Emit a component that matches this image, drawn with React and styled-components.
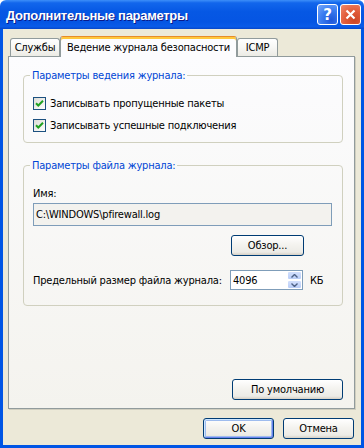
import React from "react";
import styled, { createGlobalStyle, css } from "styled-components";

const uiFont = `"DejaVu Sans Condensed", "Liberation Sans", sans-serif`;

const GlobalStyle = createGlobalStyle`
  html, body { margin: 0; padding: 0; background: #ffffff; }
  #root { width: 364px; height: 448px; }
`;

const Window = styled.div`
  width: 364px;
  height: 448px;
  display: flex;
  flex-direction: column;
  box-sizing: border-box;
  font-family: ${uiFont};
  font-size: 11px;
  letter-spacing: -0.2px;
  white-space: nowrap;
  color: #000;
`;

const TitleBar = styled.div`
  height: 29px;
  flex: none;
  display: flex;
  align-items: center;
  padding: 0 3px 0 6px;
  border-radius: 6px 6px 0 0;
  background: linear-gradient(
    180deg,
    #3d8ff9 0%,
    #1266ec 10%,
    #0658e4 40%,
    #0555e3 75%,
    #0a5be8 92%,
    #0746c9 100%
  );
`;

const Title = styled.div`
  flex: 1;
  color: #fff;
  font-family: "Liberation Sans", "DejaVu Sans", sans-serif;
  font-weight: bold;
  font-size: 13px;
  letter-spacing: -0.3px;
  text-shadow: 1px 1px 0 #0a1a8a;
  padding-top: 1px;
`;

const TitleButtons = styled.div`
  display: flex;
  gap: 2px;
`;

const TitleButton = styled.div`
  width: 21px;
  height: 21px;
  box-sizing: border-box;
  border: 1px solid #fff;
  border-radius: 3px;
  display: grid;
  place-items: center;
  color: #fff;
  font-family: "DejaVu Sans", sans-serif;
  font-weight: bold;
  font-size: 15px;
  letter-spacing: 0;
  ${(p) =>
    p.$kind === "close"
      ? css`
          background: radial-gradient(circle at 70% 80%, #cc4625 0%, #e15a38 45%, #f08a6e 100%);
        `
      : css`
          background: radial-gradient(circle at 70% 80%, #1f56d8 0%, #3a7cf0 50%, #77a8fb 100%);
        `}
`;

const Frame = styled.div`
  flex: 1;
  display: flex;
  flex-direction: column;
  background: #ece9d8;
  border: 3px solid #0055e5;
  border-top: none;
  padding: 7px 6px 6px 5px;
  min-height: 0;
`;

const TabRow = styled.div`
  display: flex;
  align-items: flex-end;
  height: 20px;
  padding-left: 2px;
  position: relative;
  z-index: 1;
`;

const Tab = styled.div`
  box-sizing: border-box;
  width: ${(p) => p.$w}px;
  height: 18px;
  border: 1px solid #919b9c;
  border-bottom: none;
  border-radius: 3px 3px 0 0;
  display: flex;
  align-items: center;
  justify-content: center;
  background: linear-gradient(180deg, #ffffff 0%, #f7f7f4 50%, #ecebe5 100%);
  ${(p) =>
    p.$active &&
    css`
      height: 21px;
      margin-bottom: -1px;
      background: #fcfcfe;
      border-top: 1px solid #e68b2c;
      box-shadow: inset 0 2px 0 #ffc83c;
      padding-top: 1px;
    `}
`;

const Panel = styled.div`
  flex: 1;
  display: flex;
  flex-direction: column;
  border: 1px solid #919b9c;
  box-shadow: 1px 1px 0 #d0cebf;
  background: linear-gradient(180deg, #fcfcfe 0%, #f4f3ee 100%);
  padding: 12px 11px 8px 14px;
`;

const Group = styled.fieldset`
  margin: ${(p) => (p.$first ? "0" : "16px 0 0 0")};
  padding: 0 10px ${(p) => p.$pb}px 9px;
  border: 1px solid #d0d0bf;
  border-radius: 4px;
  min-width: 0;
  display: flex;
  flex-direction: column;
`;

const Legend = styled.legend`
  padding: 0 2px;
  margin-left: -3px;
  color: #0046d5;
  line-height: 13px;
  font-size: 11px;
`;

const CheckRow = styled.label`
  display: flex;
  align-items: center;
  height: 13px;
  margin-top: ${(p) => p.$mt}px;
`;

const Box = styled.span`
  width: 13px;
  height: 13px;
  box-sizing: border-box;
  border: 1px solid #1c5180;
  background: linear-gradient(135deg, #dcdcd7 0%, #f5f5f2 70%, #ffffff 100%);
  display: grid;
  place-items: center;
  flex: none;
`;

const CheckText = styled.span`
  margin-left: 4px;
  line-height: 13px;
`;

const FieldLabel = styled.div`
  margin-top: 15px;
  line-height: 13px;
`;

const TextField = styled.div`
  margin-top: 3px;
  height: 23px;
  box-sizing: border-box;
  border: 1px solid #7f9db9;
  background: #f3f2ee;
  display: flex;
  align-items: center;
  padding-left: 2px;
`;

const ButtonRow = styled.div`
  display: flex;
  justify-content: flex-end;
  margin-top: ${(p) => p.$mt}px;
  padding-right: ${(p) => p.$pr || 0}px;
  gap: ${(p) => p.$gap || 0}px;
`;

const Button = styled.div`
  box-sizing: border-box;
  width: ${(p) => p.$w}px;
  height: 21px;
  border: 1px solid #003c74;
  border-radius: 3px;
  display: flex;
  align-items: center;
  justify-content: center;
  background: linear-gradient(180deg, #ffffff 0%, #f4f3ef 45%, #ecebe6 85%, #d6d0c5 100%);
  ${(p) =>
    p.$default &&
    css`
      box-shadow: inset 1px 1px 0 #cee7ff, inset -1px -1px 0 #6982ee, inset 0 0 0 2px #9ebcee;
    `}
`;

const SpinRow = styled.div`
  display: flex;
  align-items: center;
  margin-top: 14px;
  height: 20px;
`;

const SpinLabel = styled.span`
  flex: 1;
`;

const SpinBox = styled.div`
  width: 73px;
  height: 20px;
  box-sizing: border-box;
  border: 1px solid #7f9db9;
  background: #fff;
  display: flex;
  align-items: center;
`;

const SpinValue = styled.span`
  flex: 1;
  padding-left: 2px;
`;

const SpinButtons = styled.div`
  width: 15px;
  height: 18px;
  display: flex;
  flex-direction: column;
`;

const SpinHalf = styled.div`
  flex: 1;
  box-sizing: border-box;
  border: 1px solid #ffffff;
  border-radius: 2px;
  background: linear-gradient(180deg, #d3e0fd 0%, #b9cdf7 100%);
  display: grid;
  place-items: center;
`;

const Unit = styled.span`
  width: 22px;
  margin-left: 7px;
`;

const Footer = styled.div`
  margin-top: auto;
  display: flex;
  justify-content: flex-end;
`;

const Check = () => (
  <svg width="9" height="9" viewBox="0 0 9 9">
    <path d="M1 4.2 L3.3 6.5 L8 1.8" fill="none" stroke="#21a121" strokeWidth="2" />
  </svg>
);

const Arrow = ({ up }) => (
  <svg width="7" height="4" viewBox="0 0 7 4">
    <path
      d={up ? "M0.5 3.5 L3.5 0.5 L6.5 3.5" : "M0.5 0.5 L3.5 3.5 L6.5 0.5"}
      fill="none"
      stroke="#4d6185"
      strokeWidth="1.4"
    />
  </svg>
);

export default function App() {
  return (
    <>
      <GlobalStyle />
      <Window>
        <TitleBar>
          <Title>Дополнительные параметры</Title>
          <TitleButtons>
            <TitleButton $kind="help">?</TitleButton>
            <TitleButton $kind="close">
              <svg width="11" height="11" viewBox="0 0 11 11">
                <path d="M1.5 1.5 L9.5 9.5 M9.5 1.5 L1.5 9.5" stroke="#fff" strokeWidth="2.2" />
              </svg>
            </TitleButton>
          </TitleButtons>
        </TitleBar>
        <Frame>
          <TabRow>
            <Tab $w={50}>Службы</Tab>
            <Tab $w={177} $active>
              Ведение журнала безопасности
            </Tab>
            <Tab $w={41}>ICMP</Tab>
          </TabRow>
          <Panel>
            <Group $first $pb={10}>
              <Legend>Параметры ведения журнала:</Legend>
              <CheckRow $mt={15}>
                <Box>
                  <Check />
                </Box>
                <CheckText>Записывать пропущенные пакеты</CheckText>
              </CheckRow>
              <CheckRow $mt={9}>
                <Box>
                  <Check />
                </Box>
                <CheckText>Записывать успешные подключения</CheckText>
              </CheckRow>
            </Group>
            <Group $pb={15}>
              <Legend>Параметры файла журнала:</Legend>
              <FieldLabel>Имя:</FieldLabel>
              <TextField>C:\WINDOWS\pfirewall.log</TextField>
              <ButtonRow $mt={9} $pr={28}>
                <Button $w={73}>Обзор...</Button>
              </ButtonRow>
              <SpinRow>
                <SpinLabel>Предельный размер файла журнала:</SpinLabel>
                <SpinBox>
                  <SpinValue>4096</SpinValue>
                  <SpinButtons>
                    <SpinHalf>
                      <Arrow up />
                    </SpinHalf>
                    <SpinHalf>
                      <Arrow />
                    </SpinHalf>
                  </SpinButtons>
                </SpinBox>
                <Unit>КБ</Unit>
              </SpinRow>
            </Group>
            <Footer>
              <Button $w={111}>По умолчанию</Button>
            </Footer>
          </Panel>
          <ButtonRow $mt={9} $pr={1} $gap={9}>
            <Button $w={71} $default>
              OK
            </Button>
            <Button $w={71}>Отмена</Button>
          </ButtonRow>
        </Frame>
      </Window>
    </>
  );
}
